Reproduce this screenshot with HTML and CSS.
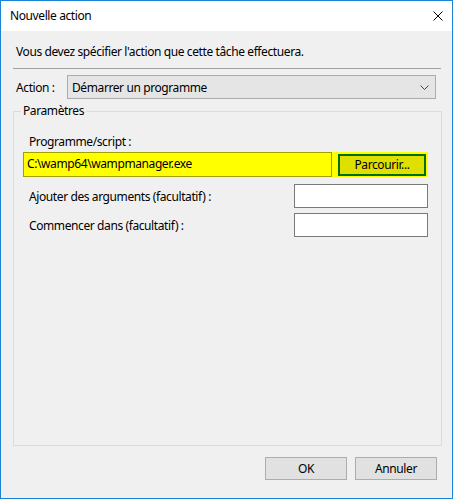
FILE: index.html
```html
<!DOCTYPE html>
<html lang="fr">
<head>
    <meta charset="UTF-8">
    <title>Nouvelle action</title>
    <link rel="stylesheet" href="styles.css">
</head>
<body>
    <div class="window">
        <div class="titlebar">
            <span class="title">Nouvelle action</span>
            <svg class="close" width="10" height="10" viewBox="0 0 10 10">
                <path d="M0.5 0.5 L9.5 9.5 M9.5 0.5 L0.5 9.5" stroke="#000" stroke-width="1" fill="none"/>
            </svg>
        </div>
        <div class="content">
            <p class="intro">Vous devez spécifier l'action que cette tâche effectuera.</p>
            <div class="separator"></div>

            <div class="action-row">
                <span class="action-label">Action :</span>
                <div class="select">
                    <span>Démarrer un programme</span>
                    <svg width="9" height="5" viewBox="0 0 9 5">
                        <path d="M0.5 0.5 L4.5 4.5 L8.5 0.5" stroke="#444" stroke-width="1" fill="none"/>
                    </svg>
                </div>
            </div>

            <fieldset class="group">
                <legend>Paramètres</legend>
                <div class="field-label">Programme/script :</div>
                <div class="program-row">
                    <div class="program-input">C:\wamp64\wampmanager.exe</div>
                    <div class="browse">Parcourir...</div>
                </div>
                <div class="option-row first">
                    <span>Ajouter des arguments (facultatif) :</span>
                    <div class="textbox"></div>
                </div>
                <div class="option-row">
                    <span>Commencer dans (facultatif) :</span>
                    <div class="textbox"></div>
                </div>
            </fieldset>

            <div class="buttons">
                <div class="button">OK</div>
                <div class="button">Annuler</div>
            </div>
        </div>
    </div>
</body>
</html>
```

FILE: styles.css
```css
body {
    margin: 0;
    padding: 0;
    background-color: #fff;
    font-family: "Noto Sans", sans-serif;
    font-size: 12px;
    letter-spacing: -0.4px;
    color: #000;
}
.window {
    width: 453px;
    height: 499px;
    box-sizing: border-box;
    border: 1px solid #1883d7;
    display: flex;
    flex-direction: column;
}
.titlebar {
    height: 30px;
    background-color: #fff;
    display: flex;
    align-items: center;
    justify-content: space-between;
    padding: 0 9px 0 9px;
}
.title {
    line-height: 16px;
}
.close {
    display: block;
}
.content {
    flex: 1;
    background-color: #f0f0f0;
    padding: 13px 10px 18px 12px;
    display: flex;
    flex-direction: column;
}
.intro {
    margin: 0;
    padding-left: 3px;
    line-height: 16px;
}
.separator {
    height: 1px;
    background-color: #a0a0a0;
    margin-top: 8px;
    margin-right: 1px;
}
.action-row {
    display: flex;
    align-items: center;
    margin-top: 6px;
    margin-right: 6px;
}
.action-label {
    padding-left: 3px;
    width: 51px;
}
.select {
    flex: 1;
    height: 24px;
    box-sizing: border-box;
    border: 1px solid #acacac;
    background-color: #e5e5e5;
    display: flex;
    align-items: center;
    justify-content: space-between;
    padding: 0 6px 0 4px;
}
.group {
    flex: 1;
    margin: 4px 0 0 0;
    padding: 15px 13px 0 9px;
    border: 1px solid #dcdcdc;
    min-width: 0;
}
.group legend {
    padding: 0 2px;
    margin-left: -2px;
    line-height: 16px;
}
.field-label {
    padding-left: 6px;
    line-height: 16px;
}
.program-row {
    display: flex;
    margin-top: 2px;
    height: 25px;
    background-color: #ffff00;
    align-items: center;
}
.program-input {
    width: 309px;
    height: 25px;
    box-sizing: border-box;
    border: 1px solid #a0a000;
    padding-left: 3px;
    line-height: 22px;
}
.browse {
    margin-left: 6px;
    width: 88px;
    height: 22px;
    box-sizing: border-box;
    border: 2px solid #007000;
    background-color: #e0e000;
    text-align: center;
    line-height: 18px;
}
.option-row {
    display: flex;
    align-items: center;
    justify-content: space-between;
    padding-left: 6px;
    margin-top: 5px;
}
.option-row.first {
    margin-top: 7px;
}
.textbox {
    width: 134px;
    height: 24px;
    box-sizing: border-box;
    border: 1px solid #7a7a7a;
    background-color: #fff;
}
.buttons {
    display: flex;
    justify-content: flex-end;
    gap: 8px;
    margin-top: 11px;
    margin-right: 5px;
}
.button {
    width: 82px;
    height: 23px;
    box-sizing: border-box;
    border: 1px solid #adadad;
    background-color: #e1e1e1;
    text-align: center;
    line-height: 21px;
}
```
